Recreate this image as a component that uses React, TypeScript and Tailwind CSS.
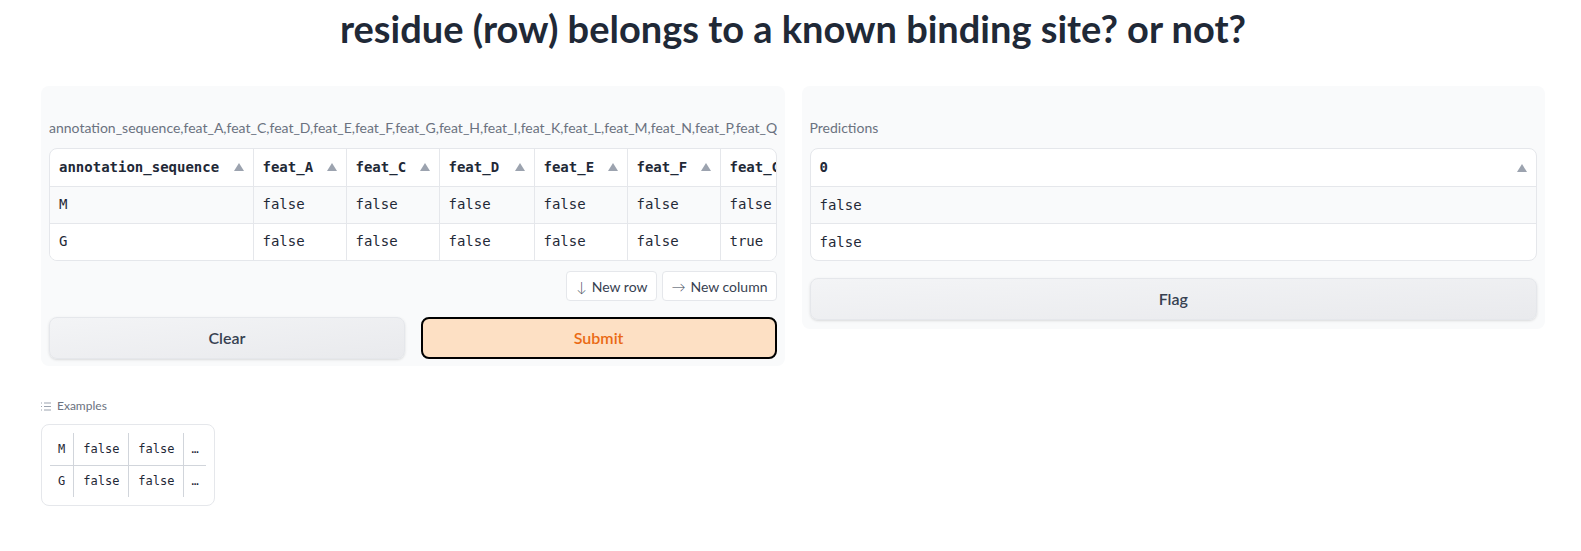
import type { ReactNode } from 'react';

const SANS = { fontFamily: 'Lato, "Noto Sans", sans-serif' };
const MONO = { fontFamily: '"DejaVu Sans Mono", "Liberation Mono", monospace' };

const headers = ['annotation_sequence', 'feat_A', 'feat_C', 'feat_D', 'feat_E', 'feat_F', 'feat_G'];
const widths = [203, 93, 93, 95, 93, 93, 93];
const rows = [
  ['M', 'false', 'false', 'false', 'false', 'false', 'false'],
  ['G', 'false', 'false', 'false', 'false', 'false', 'true'],
];

const labelText =
  'annotation_sequence,feat_A,feat_C,feat_D,feat_E,feat_F,feat_G,feat_H,feat_I,feat_K,feat_L,feat_M,feat_N,feat_P,feat_Q,feat_R,feat_S,feat_T,feat_V,feat_W,feat_Y';

function SortArrow() {
  return (
    <svg width="10" height="8" viewBox="0 0 10 8" className="shrink-0">
      <path d="M5 0 L10 8 L0 8 Z" fill="#9ca3af" />
    </svg>
  );
}

function Panel({ children, className }: { children: ReactNode; className?: string }) {
  return <div className={`bg-[#f9fafb] rounded-lg px-2 pt-8 ${className ?? ''}`}>{children}</div>;
}

function FeatureTable() {
  return (
    <div className="border border-[#e5e7eb] rounded-lg overflow-hidden bg-white">
      <table className="border-collapse table-fixed text-[14px] text-[#1f2937]" style={MONO}>
        <thead>
          <tr className="h-[37px]">
            {headers.map((h, i) => (
              <th
                key={h}
                style={{ width: widths[i], minWidth: widths[i] }}
                className="border-r border-[#e5e7eb] px-[9px] text-left font-semibold"
              >
                <div className="flex items-center justify-between gap-2 whitespace-nowrap">
                  <span>{h}</span>
                  {i < headers.length - 1 && <SortArrow />}
                </div>
              </th>
            ))}
          </tr>
        </thead>
        <tbody>
          {rows.map((r, ri) => (
            <tr key={ri} className={`h-[37px] border-t border-[#e5e7eb] ${ri === 0 ? 'bg-[#f9fafb]' : 'bg-white'}`}>
              {r.map((c, ci) => (
                <td key={ci} className={`px-[9px] whitespace-nowrap ${ci < r.length - 1 ? 'border-r border-[#e5e7eb]' : ''}`}>
                  {c}
                </td>
              ))}
            </tr>
          ))}
        </tbody>
      </table>
    </div>
  );
}

function PredictionTable() {
  return (
    <div className="border border-[#e5e7eb] rounded-lg overflow-hidden bg-white text-[14px] text-[#1f2937]" style={MONO}>
      <div className="h-[37px] flex items-center justify-between px-[9px] font-semibold">
        <span>0</span>
        <SortArrow />
      </div>
      <div className="h-[37px] flex items-center px-[9px] border-t border-[#e5e7eb] bg-[#f9fafb]">false</div>
      <div className="h-[37px] flex items-center px-[9px] border-t border-[#e5e7eb]">false</div>
    </div>
  );
}

function GrayButton({ children }: { children: ReactNode }) {
  return (
    <button className="h-[42px] w-full rounded-lg border border-[#e5e7eb] bg-gradient-to-br from-[#f3f4f6] to-[#e9eaed] text-[16px] font-semibold text-[#374151] shadow-sm">
      {children}
    </button>
  );
}

export default function App() {
  return (
    <div className="bg-white min-h-[551px] pl-[41px] pr-[36px]" style={SANS}>
      <h1 className="text-center text-[38px] font-bold text-[#1f2937] leading-[56px] h-[86px]">
        residue (row) belongs to a known binding site? or not?
      </h1>

      <div className="grid grid-cols-2 gap-[17px] items-start">
        <Panel className="pb-[7px]">
          <div className="text-[14px] text-[#6b7280] whitespace-nowrap overflow-hidden leading-5 mb-[10px]">
            {labelText}
          </div>
          <FeatureTable />
          <div className="flex justify-end gap-[5px] mt-[10px]">
            <button className="h-[30px] px-[9px] rounded border border-[#e5e7eb] bg-white text-[14px] text-[#374151] flex items-center gap-[5px]">
              <span className="font-light">↓</span>New row
            </button>
            <button className="h-[30px] px-[8px] rounded border border-[#e5e7eb] bg-white text-[14px] text-[#374151] flex items-center gap-[5px]">
              <span className="font-light">→</span>New column
            </button>
          </div>
          <div className="grid grid-cols-2 gap-4 mt-[16px]">
            <GrayButton>Clear</GrayButton>
            <button className="h-[42px] w-full rounded-lg border-2 border-black bg-[#fde0c4] text-[16px] font-semibold text-[#ea6a14]">
              Submit
            </button>
          </div>
        </Panel>

        <Panel className="pb-[9px]">
          <div className="text-[14px] text-[#6b7280] leading-5 mb-[10px]">Predictions</div>
          <PredictionTable />
          <div className="mt-[17px]">
            <GrayButton>Flag</GrayButton>
          </div>
        </Panel>
      </div>

      <div className="mt-[32px]">
        <div className="flex items-center gap-[6px] text-[12px] text-[#6b7280] h-[16px]">
          <svg width="10" height="9" viewBox="0 0 10 9" fill="none" stroke="#9ca3af" strokeWidth="1">
            <path d="M0 1h1M3 1h7M0 4.5h1M3 4.5h7M0 8h1M3 8h7" />
          </svg>
          Examples
        </div>
        <div className="mt-[10px] inline-block border border-[#e5e7eb] rounded-lg px-2 py-2 bg-white">
          <table className="border-collapse text-[12px] text-[#1f2937]" style={MONO}>
            <tbody>
              {[['M', 'false', 'false'], ['G', 'false', 'false']].map((r, ri) => (
                <tr key={ri} className={`h-[32px] ${ri === 0 ? 'border-b border-[#d1d5db]' : ''}`}>
                  {r.map((c, ci) => (
                    <td key={ci} className={`${ci === 0 ? 'px-2' : 'px-[9px]'} border-r border-[#d1d5db]`}>
                      {c}
                    </td>
                  ))}
                  <td className="px-[7px]">…</td>
                </tr>
              ))}
            </tbody>
          </table>
        </div>
      </div>
    </div>
  );
}
